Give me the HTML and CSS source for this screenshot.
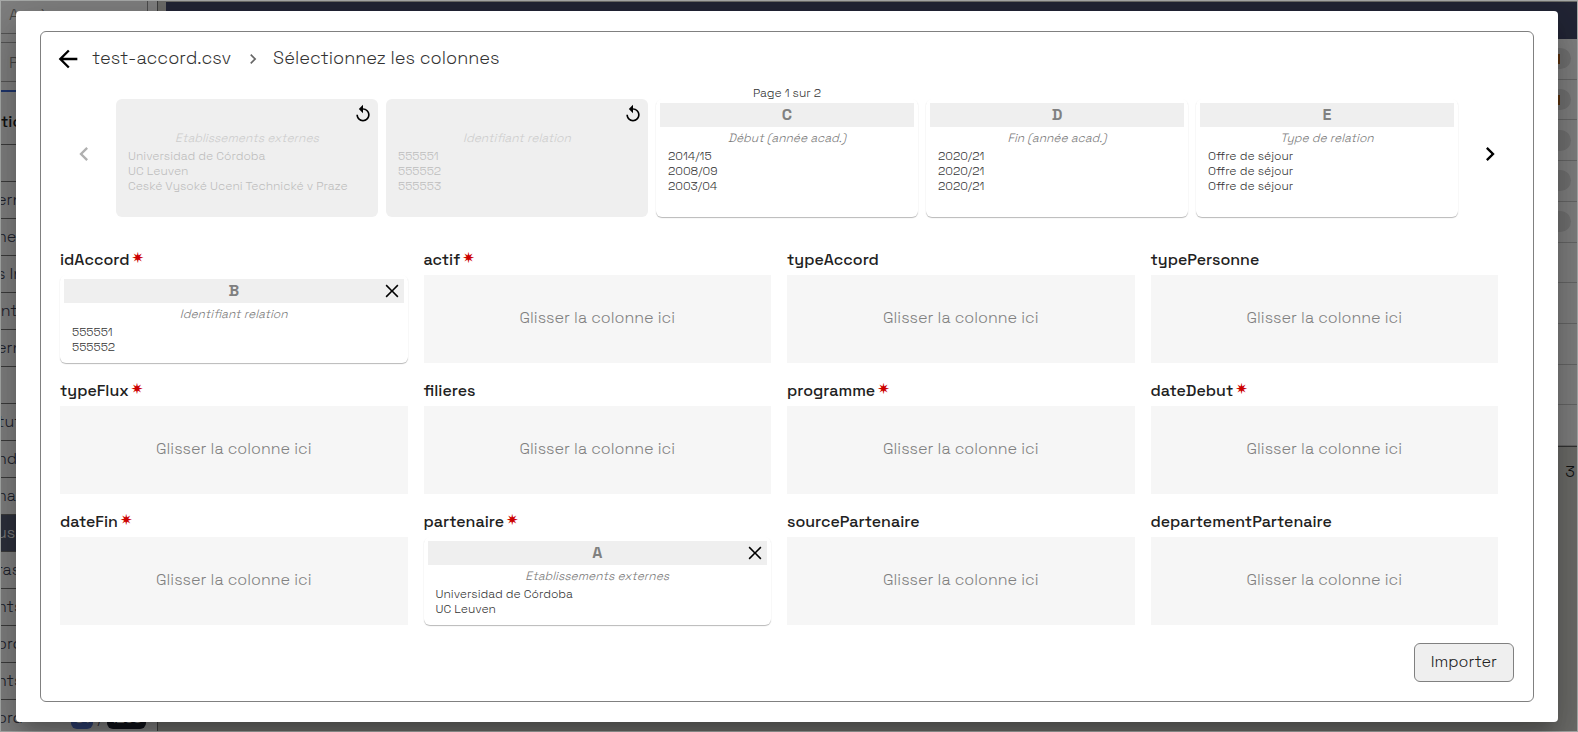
FILE: index.html
```html
<!DOCTYPE html>
<html lang="fr">
<head>
	<meta charset="UTF-8">
	<title>Import - Sélectionnez les colonnes</title>
	<link rel="stylesheet" href="styles.css">
</head>
<body>
	<svg class="sprite">
		<symbol id="back" viewBox="0 0 24 24"><path d="M20 11H7.83l5.59-5.59L12 4l-8 8 8 8 1.41-1.41L7.83 13H20v-2z"/></symbol>
		<symbol id="left" viewBox="0 0 24 24"><path d="M15.41 7.41L14 6l-6 6 6 6 1.41-1.41L10.83 12z"/></symbol>
		<symbol id="right" viewBox="0 0 24 24"><path d="M8.59 16.59L13.17 12 8.59 7.41 10 6l6 6-6 6z"/></symbol>
		<symbol id="replay" viewBox="0 0 24 24"><path d="M12 5V1L7 6l5 5V7c3.31 0 6 2.69 6 6s-2.69 6-6 6-6-2.69-6-6H4c0 4.42 3.58 8 8 8s8-3.58 8-8-3.58-8-8-8z"/></symbol>
		<symbol id="close" viewBox="0 0 24 24"><path d="M19 6.2L17.8 5 12 10.8 6.2 5 5 6.2l5.8 5.8L5 17.8 6.2 19l5.8-5.8 5.8 5.8 1.2-1.2-5.8-5.8z"/></symbol>
	</svg>

	<div class="app">
		<div class="sidebar">
			<div class="filter">Accès</div>
			<div class="filter second">Pays</div>
			<div class="side-title">tions</div>
			<ul>
				<li></li>
				<li>erne</li>
				<li>nent</li>
				<li>s Int</li>
				<li>inte</li>
				<li>erne</li>
				<li></li>
				<li>tuts</li>
				<li>nds</li>
				<li>naux</li>
				<li class="active">us</li>
				<li>ras</li>
				<li>nts</li>
				<li>ord</li>
				<li>nts</li>
				<li>ord <span class="count"><b>61</b>/<b class="dark">1259</b></span></li>
			</ul>
		</div>
		<div class="main">
			<div class="navbar"></div>
			<div class="rows">
				<div><i class="mark"></i></div>
				<div><i class="mark"></i></div>
				<div><i></i></div>
				<div><i></i></div>
				<div><i></i></div>
				<div></div>
				<div></div>
				<div></div>
				<div></div>
				<div></div>
			</div>
			<div class="pager">3</div>
		</div>
	</div>

	<div class="overlay">
		<div class="modal" role="dialog">
			<div class="panel">
				<nav class="crumbs">
					<button class="icon-btn" aria-label="Retour"><svg class="i28"><use href="#back"/></svg></button>
					<span>test-accord.csv</span>
					<svg class="i20 sep"><use href="#right"/></svg>
					<span>Sélectionnez les colonnes</span>
				</nav>

				<div class="page">Page 1 sur 2</div>
				<div class="slider">
					<button class="icon-btn nav-btn" aria-label="Page précédente" disabled><svg class="i28"><use href="#left"/></svg></button>
					<div class="card used">
						<button class="icon-btn undo" aria-label="Annuler"><svg class="i20"><use href="#replay"/></svg></button>
						<div class="letter"></div>
						<div class="name">Etablissements externes</div>
						<ul><li>Universidad de Córdoba</li><li>UC Leuven</li><li>Ceské Vysoké Uceni Technické v Praze</li></ul>
					</div>
					<div class="card used">
						<button class="icon-btn undo" aria-label="Annuler"><svg class="i20"><use href="#replay"/></svg></button>
						<div class="letter"></div>
						<div class="name">Identifiant relation</div>
						<ul><li>555551</li><li>555552</li><li>555553</li></ul>
					</div>
					<div class="card">
						<div class="letter">C</div>
						<div class="name">Début (année acad.)</div>
						<ul><li>2014/15</li><li>2008/09</li><li>2003/04</li></ul>
					</div>
					<div class="card">
						<div class="letter">D</div>
						<div class="name">Fin (année acad.)</div>
						<ul><li>2020/21</li><li>2020/21</li><li>2020/21</li></ul>
					</div>
					<div class="card">
						<div class="letter">E</div>
						<div class="name">Type de relation</div>
						<ul><li>Offre de séjour</li><li>Offre de séjour</li><li>Offre de séjour</li></ul>
					</div>
					<button class="icon-btn nav-btn" aria-label="Page suivante"><svg class="i28"><use href="#right"/></svg></button>
				</div>

				<div class="fields">
					<div class="field">
						<h3>idAccord <em>✷</em></h3>
						<div class="card">
							<button class="icon-btn remove" aria-label="Retirer"><svg class="i22"><use href="#close"/></svg></button>
							<div class="letter">B</div>
							<div class="name">Identifiant relation</div>
							<ul><li>555551</li><li>555552</li></ul>
						</div>
					</div>
					<div class="field">
						<h3>actif <em>✷</em></h3>
						<div class="drop">Glisser la colonne ici</div>
					</div>
					<div class="field">
						<h3>typeAccord</h3>
						<div class="drop">Glisser la colonne ici</div>
					</div>
					<div class="field">
						<h3>typePersonne</h3>
						<div class="drop">Glisser la colonne ici</div>
					</div>
					<div class="field">
						<h3>typeFlux <em>✷</em></h3>
						<div class="drop">Glisser la colonne ici</div>
					</div>
					<div class="field">
						<h3>filieres</h3>
						<div class="drop">Glisser la colonne ici</div>
					</div>
					<div class="field">
						<h3>programme <em>✷</em></h3>
						<div class="drop">Glisser la colonne ici</div>
					</div>
					<div class="field">
						<h3>dateDebut <em>✷</em></h3>
						<div class="drop">Glisser la colonne ici</div>
					</div>
					<div class="field">
						<h3>dateFin <em>✷</em></h3>
						<div class="drop">Glisser la colonne ici</div>
					</div>
					<div class="field">
						<h3>partenaire <em>✷</em></h3>
						<div class="card">
							<button class="icon-btn remove" aria-label="Retirer"><svg class="i22"><use href="#close"/></svg></button>
							<div class="letter">A</div>
							<div class="name">Etablissements externes</div>
							<ul><li>Universidad de Córdoba</li><li>UC Leuven</li></ul>
						</div>
					</div>
					<div class="field">
						<h3>sourcePartenaire</h3>
						<div class="drop">Glisser la colonne ici</div>
					</div>
					<div class="field">
						<h3>departementPartenaire</h3>
						<div class="drop">Glisser la colonne ici</div>
					</div>
				</div>

				<div class="actions">
					<button class="import">Importer</button>
				</div>
			</div>
		</div>
	</div>
</body>
</html>
```
FILE: styles.css
```css
*{
	margin:0;
	padding:0;
	list-style:none;
	box-sizing:border-box;
}
body{
	font-family:"Space Grotesk",Inter,sans-serif;
	font-weight:300;
	font-size:16px;
	color:#212121;
}
button{
	font:inherit;
	color:inherit;
}
.sprite{
	display:none;
}
svg{
	display:block;
	fill:currentColor;
}
.i20{
	width:20px;
	height:20px;
}
.i22{
	width:22px;
	height:22px;
}
.i28{
	width:28px;
	height:28px;
}

/* page behind the dialog */
.app{
	display:flex;
	height:100vh;
	overflow:hidden;
	border:1px solid #fff;
	background:#fff;
}
.sidebar{
	width:157px;
	flex:none;
	overflow:hidden;
	border-right:1px solid #777;
}
.filter{
	height:33px;
	padding-left:8px;
	line-height:28px;
	color:#888;
	border-right:1px solid #999;
	border-bottom:1px solid #aaa;
	margin-right:9px;
}
.filter.second{
	height:40px;
	margin-top:8px;
	line-height:40px;
	border-top:1px solid #aaa;
}
.side-title{
	height:55px;
	margin-top:8px;
	line-height:60px;
	font-weight:500;
	border-top:2px solid #3f6ad8;
	border-bottom:1px solid #777;
}
.sidebar li{
	height:37px;
	line-height:36px;
	text-indent:-4px;
	border-bottom:1px solid #777;
	white-space:nowrap;
	color:#3a4055;
}
.sidebar li.active{
	background:#5a6078;
	color:#fff;
}
.count{
	margin-left:44px;
	font-size:14px;
}
.count b{
	padding:2px 4px;
	margin-right:4px;
	border-radius:6px;
	background:#5b7fe0;
	color:#fff;
}
.count .dark{
	margin-left:4px;
	background:#212534;
}
.main{
	flex:1;
	display:flex;
	flex-direction:column;
	padding-top:1px;
	background:#d8d8d3;
}
.navbar{
	height:37px;
	flex:none;
	margin-left:8px;
	background:#444a6a;
}
.rows{
	display:flex;
	flex-direction:column;
	height:408px;
	background:#fff;
	border-bottom:1px solid #666;
}
.rows div{
	flex:1;
	display:flex;
	align-items:center;
	justify-content:flex-end;
	padding-right:6px;
	border-bottom:1px solid #ccc;
}
.rows i{
	display:flex;
	align-items:center;
	justify-content:flex-end;
	width:40px;
	height:21px;
	border-radius:11px;
	background:#e2e2e2;
}
.rows .mark::after{
	content:"";
	width:4px;
	height:10px;
	margin-right:11px;
	background:#b5651d;
}
.pager{
	padding:14px 2px;
	text-align:right;
}

/* dialog */
.overlay{
	position:absolute;
	top:0;
	left:0;
	right:0;
	min-height:100%;
	padding:11px 20px 10px 16px;
	background:rgba(0,0,0,.5);
	box-shadow:inset 0 0 0 1px #a8aba9;
	overflow:hidden;
}
.modal{
	padding:20px 24px;
	background:#fff;
	border-radius:4px;
	box-shadow:0 11px 15px -7px rgba(0,0,0,.2),0 24px 38px 3px rgba(0,0,0,.14),0 9px 46px 8px rgba(0,0,0,.12);
}
.panel{
	padding:0 19px 19px;
	border:1px solid #808080;
	border-radius:6px;
}
.icon-btn{
	border:0;
	background:none;
	color:#000;
	cursor:pointer;
}
.crumbs{
	display:flex;
	align-items:center;
	height:54px;
	margin-left:-6px;
	font-size:18px;
	line-height:22px;
	color:#333;
}
.crumbs span{
	padding-bottom:2px;
}
.crumbs .icon-btn{
	margin-right:10px;
}
.crumbs .sep{
	margin:0 10px 0 12px;
	color:#666;
}
.page{
	height:13px;
	line-height:15px;
	font-size:12px;
	text-align:center;
	color:#333;
}
.slider{
	display:flex;
	gap:8px;
}
.nav-btn{
	width:48px;
	padding-bottom:8px;
	display:flex;
	align-items:center;
	justify-content:center;
}
.nav-btn:disabled{
	color:#b0b0b0;
}
.card{
	position:relative;
	flex:1;
	min-width:0;
	padding:4px;
	border-radius:6px;
	background:#fff;
	box-shadow:0 1px 1px rgba(0,0,0,.28);
	color:#333;
}
.slider .card{
	height:118px;
}
.letter{
	height:24px;
	line-height:24px;
	background:#efefef;
	color:#808080;
	font-weight:700;
	text-align:center;
}
.name{
	margin:4px 0 3px;
	line-height:15px;
	font-size:12px;
	font-style:italic;
	text-align:center;
	color:#777;
}
.card li{
	padding-left:8px;
	line-height:15px;
	font-size:12px;
	white-space:nowrap;
}
.card.used{
	background:#efefef;
	box-shadow:none;
	color:#bdbdbd;
}
.used .name{
	color:#ccc;
}
.undo,.remove{
	position:absolute;
	top:5px;
	right:5px;
}

.fields{
	display:grid;
	grid-template-columns:repeat(4,1fr);
	gap:16px;
	margin-top:31px;
	padding-right:16px;
}
.field h3{
	height:27px;
	line-height:24px;
	font-size:16px;
	font-weight:500;
}
.field em{
	margin-left:-2px;
	font-family:"DejaVu Sans",sans-serif;
	font-size:15px;
	line-height:15px;
	font-style:normal;
	font-weight:700;
	vertical-align:2px;
	color:#c00;
}
.field .card,.drop{
	height:88px;
}
.drop{
	display:flex;
	align-items:center;
	justify-content:center;
	padding-bottom:4px;
	background:#f6f6f6;
	color:#808080;
}
.actions{
	display:flex;
	justify-content:flex-end;
	margin-top:18px;
}
.import{
	height:39px;
	padding:0 16px 2px;
	border:1px solid #808080;
	border-radius:6px;
	background:#efefef;
	cursor:pointer;
}
```
